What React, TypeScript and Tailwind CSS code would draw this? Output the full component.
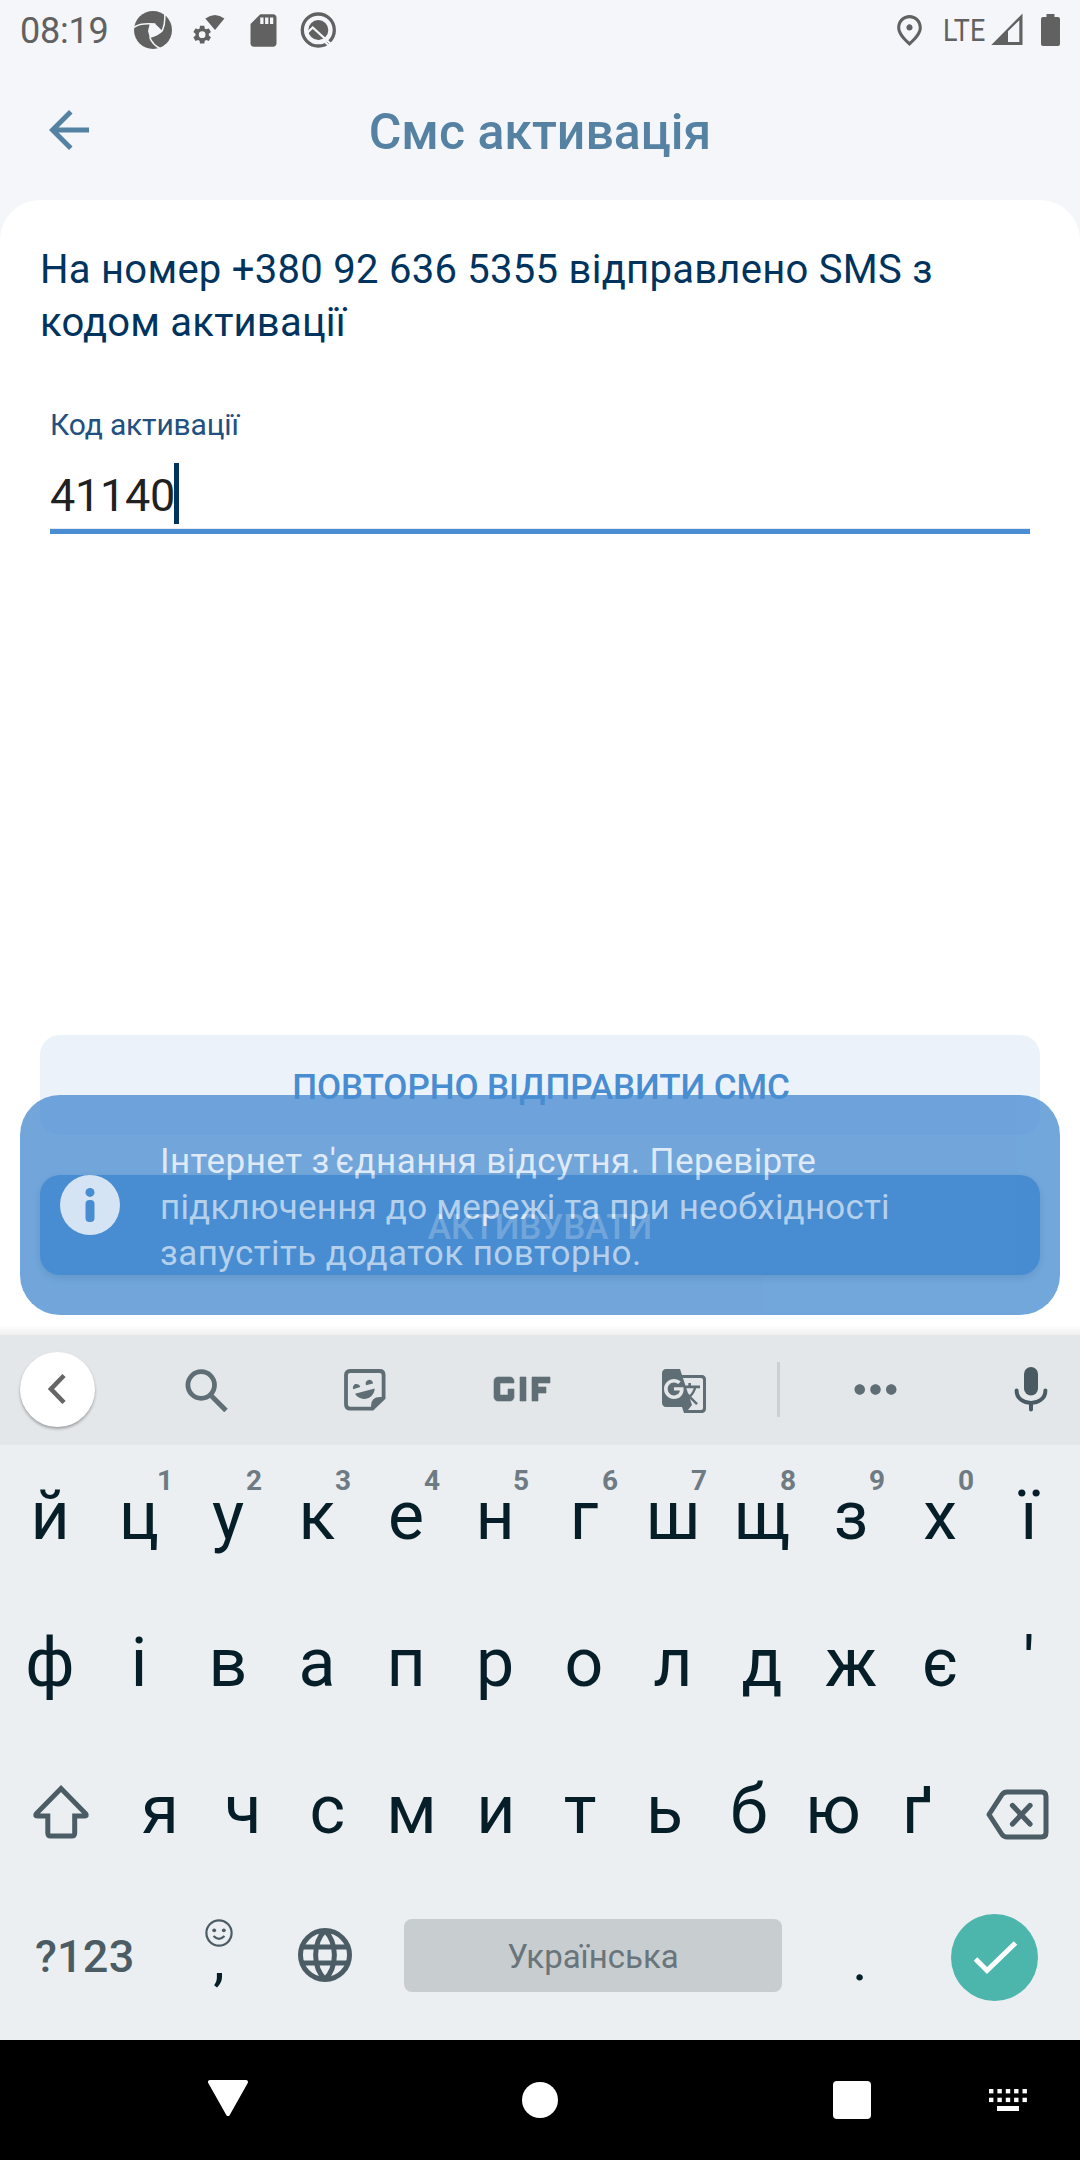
import React from "react";
import { MdGif, MdGTranslate, MdMoreHoriz, MdOutlinePlace, MdSdCard, MdArrowBack } from "react-icons/md";

const ROW_ONE: [string, string?][] = [
  ["й"], ["ц", "1"], ["у", "2"], ["к", "3"], ["е", "4"], ["н", "5"],
  ["г", "6"], ["ш", "7"], ["щ", "8"], ["з", "9"], ["х", "0"], ["ї"],
];
const ROW_TWO: [string, string?][] = [
  ["ф"], ["і"], ["в"], ["а"], ["п"], ["р"], ["о"], ["л"], ["д"], ["ж"], ["є"], ["'"],
];
const ROW_THREE = ["я", "ч", "с", "м", "и", "т", "ь", "б", "ю", "ґ"];

function StatusBar() {
  return (
    <div className="flex h-[60px] items-center text-[#616161]">
      <span className="ml-5 w-[89px] pt-[2px] text-[36px] leading-[42px] tracking-[-.2px] whitespace-nowrap">08:19</span>
      <svg className="ml-[25px]" width="39" height="38" viewBox="0 0 39 38">
        <circle cx="19" cy="19" r="19" fill="currentColor" />
        <path d="M15.7 12.7 21.3 13 28.3 19.7 22.7 24 15.7 26.3 14 20Z" fill="#f4f6fa" />
        <path d="M0 16.3Q6 11.5 21.3 13M30.6 1.5Q31.7 12 28.3 19.7M28.3 19.7Q24 24 15.7 26.3M15.7 26.3Q18.5 34 27 38M38.5 30 30 35.5" fill="none" stroke="#f4f6fa" strokeWidth="1.5" />
      </svg>
      <svg className="ml-[19px]" width="34" height="38" viewBox="0 0 34 38">
        <path d="M13.3 7.6Q23 .6 32.4 7.6L23 19Z" fill="currentColor" />
        <g transform="translate(-1 12.5) scale(.93)">
          <path fill="currentColor" d="M19.14 12.94c.04-.3.06-.61.06-.94 0-.32-.02-.64-.07-.94l2.03-1.58a.49.49 0 0 0 .12-.61l-1.92-3.32a.488.488 0 0 0-.59-.22l-2.39.96c-.5-.38-1.03-.7-1.62-.94l-.36-2.54a.484.484 0 0 0-.48-.41h-3.84c-.24 0-.43.17-.47.41l-.36 2.54c-.59.24-1.13.57-1.62.94l-2.39-.96c-.22-.08-.47 0-.59.22L2.74 8.87c-.12.21-.08.47.12.61l2.03 1.58c-.05.3-.09.63-.09.94s.02.64.07.94l-2.03 1.58a.49.49 0 0 0-.12.61l1.92 3.32c.12.22.37.29.59.22l2.39-.96c.5.38 1.03.7 1.62.94l.36 2.54c.05.24.24.41.48.41h3.84c.24 0 .44-.17.47-.41l.36-2.54c.59-.24 1.13-.56 1.62-.94l2.39.96c.22.08.47 0 .59-.22l1.92-3.32c.12-.22.07-.47-.12-.61l-2.01-1.58zM12 15.6A3.6 3.6 0 1 1 12 8.4a3.6 3.6 0 0 1 0 7.2z" />
        </g>
      </svg>
      <MdSdCard className="ml-[18px] size-[39px]" />
      <svg className="ml-[17px]" width="37" height="36" viewBox="0 0 37 36">
        <circle cx="18.300" cy="18" r="16" fill="none" stroke="currentColor" strokeWidth="3.300" />
        <circle cx="18.300" cy="18" r="10" fill="currentColor" />
        <path d="M6.500 21.500 12.700 15.500 33 34" fill="none" stroke="#f4f6fa" strokeWidth="2.300" />
        <path d="M11.500 19 20 27" fill="none" stroke="currentColor" strokeWidth="3" />
        <path d="M24.500 29.500 30 34.500" stroke="#f4f6fa" strokeWidth="2" />
      </svg>
      <MdOutlinePlace className="ml-auto size-[37px]" />
      <div className="ml-[15px] w-[43px]">
        <span className="block origin-left scale-x-[.84] text-[32px] leading-[38px]">LTE</span>
      </div>
      <svg className="-mt-[2px] ml-[5px]" width="32" height="32" viewBox="0 0 32 32">
        <path fill="currentColor" fillRule="evenodd" d="M.3 32 31.5.5V32ZM17 18.2V29H28.3V7.3Z" />
      </svg>
      <svg className="-mt-px mr-5 ml-[18px]" width="19" height="32" viewBox="0 0 19 32">
        <path fill="currentColor" d="M5.5 0h8v3H17a2 2 0 0 1 2 2v25a2 2 0 0 1-2 2H2a2 2 0 0 1-2-2V5a2 2 0 0 1 2-2h3.500Z" />
      </svg>
    </div>
  );
}

function Header() {
  return (
    <div className="flex h-[140px] items-center text-[#5581a3]">
      <MdArrowBack className="ml-[39px] size-[60px]" />
      <h1 className="mt-[3px] mr-[99px] flex-1 text-center text-[50px] leading-[60px] font-medium">Смс активація</h1>
    </div>
  );
}

function Snackbar() {
  return (
    <div className="absolute bottom-5 left-5 flex h-[220px] w-[1040px] items-center rounded-[40px] bg-[#488cd1] opacity-77">
      <svg className="ml-10" width="60" height="60" viewBox="0 0 60 60">
        <circle cx="30" cy="30" r="30" fill="#fff" />
        <circle cx="30" cy="17.400" r="4.500" fill="#488cd1" />
        <rect x="25.500" y="25" width="9" height="22" rx="4" fill="#488cd1" />
      </svg>
      <p className="mt-[6px] ml-10 text-[35px] leading-[46px] whitespace-nowrap text-white/78">
        <span className="block tracking-[.46px]">Інтернет з'єднання відсутня. Перевірте</span>
        <span className="block tracking-[.2px]">підключення до мережі та при необхідності</span>
        <span className="block tracking-[.43px]">запустіть додаток повторно.</span>
      </p>
    </div>
  );
}

function Card() {
  return (
    <div className="relative flex h-[1135px] flex-col overflow-hidden rounded-t-[40px] bg-white px-10 pt-[43px]">
      <p className="text-[40px] leading-[53px] whitespace-nowrap text-[#00345f]">
        <span className="block tracking-[.27px]">На номер +380 92 636 5355 відправлено SMS з</span>
        <span className="block tracking-[.2px]">кодом активації</span>
      </p>
      <div className="mx-[10px] mt-[58px] flex flex-col">
        <label className="text-[30px] leading-[36px] tracking-[-.15px] text-[#215081]">Код активації</label>
        <div className="mt-[20px] flex h-[61px] items-start">
          <span className="pt-[2px] text-[45px] leading-[61px] tracking-[-.3px] text-[#212121]">41140</span>
          <span className="-ml-px h-[61px] w-[5px] bg-[#00345f]" />
        </div>
        <div className="mt-[4px] h-[6px] border-t border-[#e6e9ef] bg-[#4b8dd3]" />
      </div>
      <div className="mt-auto mb-[60px] flex flex-col gap-10 text-[35px] font-medium">
        <button className="h-[100px] rounded-[20px] bg-[#ebf2fa] pt-[6px] pl-[2px] tracking-[-.07px] text-[#488cd1]">
          ПОВТОРНО ВІДПРАВИТИ СМС
        </button>
        <button className="h-[100px] rounded-[20px] bg-[#488cd1] pt-[6px] tracking-[-.05px] text-white shadow-[0_3px_8px_rgba(0,0,0,.28)]">
          АКТИВУВАТИ
        </button>
      </div>
      <Snackbar />
      <div className="absolute inset-x-0 bottom-0 h-[10px] bg-linear-to-b from-black/0 to-black/6" />
    </div>
  );
}

function Toolbar() {
  return (
    <div className="flex h-[110px] items-center bg-[#e3e7ea] pb-[2px] text-[#5f6e75]">
      <div className="ml-5 flex size-[75px] items-center justify-center rounded-full bg-white shadow-[0_2px_3px_rgba(0,0,0,.3)]">
        <svg width="20" height="32" viewBox="0 0 20 32" className="mr-px">
          <path d="M17 2.500 4 16 17 29.500" fill="none" stroke="#656565" strokeWidth="4.600" />
        </svg>
      </div>
      <svg className="mt-[2px] ml-[90px]" width="44" height="43" viewBox="0 0 44 43">
        <circle cx="16.200" cy="16" r="13.300" fill="none" stroke="currentColor" strokeWidth="4.800" />
        <path d="M26.500 27 41 41.500" stroke="currentColor" strokeWidth="5" />
      </svg>
      <svg className="mt-px ml-[115px]" width="42" height="42" viewBox="0 0 42 42">
        <path d="M6 2H35.600Q39.600 2 39.600 6V29L28.500 39.600H6Q2 39.600 2 35.600V6Q2 2 6 2Z" fill="none" stroke="currentColor" strokeWidth="3.800" />
        <path d="M41 28H36Q27 28 27 37V41.400Z" fill="currentColor" />
        <path d="M9.200 20.200A3.700 3.700 0 1 1 16.200 18Z" fill="currentColor" />
        <path d="M22 16.200A3.700 3.700 0 1 1 29 14.400Z" fill="currentColor" />
        <path d="M11 24.800 30.700 19.600C30 31.500 15.500 33 11 24.800Z" fill="currentColor" />
      </svg>
      <MdGif className="ml-[88px] size-[96px] stroke-current stroke-[.15] [&_path[fill=none]]:stroke-none" />
      <MdGTranslate className="mt-[3px] ml-[90px] size-[48px]" />
      <div className="ml-[69px] h-[55px] w-[3px] bg-[#cbd0d3]" />
      <MdMoreHoriz className="mt-px ml-[64px] size-[63px]" />
      <svg className="ml-[106px] text-[#4a5a62]" width="36" height="45" viewBox="0 0 36 45">
        <rect x="11" y="0" width="14" height="28.500" rx="7" fill="currentColor" />
        <path d="M3.600 23.500C3.600 40 32.400 40 32.400 23.500M18 36V42.500" fill="none" stroke="currentColor" strokeWidth="4" strokeLinecap="round" />
      </svg>
    </div>
  );
}

function KeyRow({ keys }: { keys: [string, string?][] }) {
  return (
    <div className="grid h-[147px] grid-cols-12 pr-[6.500px] pl-[5.500px]">
      {keys.map(([key, hint]) => (
        <div key={key} className="relative flex items-center justify-center">
          <span>{key}</span>
          {hint && (
            <span className="absolute top-[22px] left-[62.500px] text-[28px] leading-[34px] font-bold text-[#6f7b82]">{hint}</span>
          )}
        </div>
      ))}
    </div>
  );
}

function Keyboard() {
  return (
    <div className="h-[705px] bg-[#ebeff2] text-[#061e28]">
      <Toolbar />
      <div className="-mt-[3px] text-[68px] leading-[80px]">
        <KeyRow keys={ROW_ONE} />
        <KeyRow keys={ROW_TWO} />
        <div className="flex h-[147px] items-center">
          <div className="w-[116.500px] pl-[31px]">
            <svg className="mt-[4px]" width="60" height="58" viewBox="0 0 60 58">
              <path d="M30 5.500 54.600 30.600Q56.500 33 53.500 33H43.700V50Q43.700 53 40.700 53H19.800Q16.800 53 16.800 50V33H6.500Q3.500 33 5.400 30.600Z" fill="none" stroke="#4b5c64" strokeWidth="5" />
            </svg>
          </div>
          {ROW_THREE.map((key) => (
            <span key={key} className="w-[84.300px] text-center first-of-type:pl-[3px]">{key}</span>
          ))}
          <svg className="mt-[8px] ml-[24.500px]" width="66" height="54" viewBox="0 0 66 54">
            <path d="M5 27.500 18 7.500Q20 5 23 5H57.500Q62 5 62 9.500V45.500Q62 50 57.500 50H23Q20 50 18 47.500Z" fill="none" stroke="#4b5c64" strokeWidth="5" strokeLinejoin="round" />
            <path d="M28.500 18.500 46 37M46 18.500 28.500 37" stroke="#4b5c64" strokeWidth="5.200" strokeLinecap="round" />
          </svg>
        </div>
        <div className="flex h-[147px] items-center">
          <span className="ml-[35px] w-[99px] text-[45px] leading-[54px] font-medium tracking-[.2px] whitespace-nowrap text-[#4b5c64]">?123</span>
          <div className="ml-[57px] flex w-[56px] flex-col items-center self-start pt-[36px]">
            <svg width="28" height="28" viewBox="0 0 28 28" fill="none" stroke="#4b5c64" strokeWidth="2.200">
              <circle cx="14" cy="14" r="12.600" />
              <circle cx="9.200" cy="11.300" r="1.900" fill="#4b5c64" stroke="none" />
              <circle cx="18.800" cy="11.300" r="1.900" fill="#4b5c64" stroke="none" />
              <path d="M8.500 17Q14 22.500 19.500 17" />
            </svg>
            <span className="-mt-[8px] text-[58px] leading-[40px]">,</span>
          </div>
          <svg className="-mt-[3px] ml-[51px]" width="54" height="54" viewBox="0 0 54 54" fill="none" stroke="#4b5c64" strokeWidth="5">
            <circle cx="27" cy="27" r="24.500" />
            <path d="M4.500 19H49.500M4.500 35H49.500M27 2.500C14.500 15 14.500 39 27 51.500M27 2.500C39.500 15 39.500 39 27 51.500" />
          </svg>
          <div className="-mt-[2px] ml-[52px] flex h-[73px] w-[378px] items-center justify-center rounded-[8px] bg-[#c8cdd0] pt-[2px] text-[33px] leading-[40px] text-[#69757b]">
            Українська
          </div>
          <span className="mt-[7px] ml-[58px] w-[40px] text-center text-[58px] leading-[60px]">.</span>
          <div className="mt-[2px] ml-[71px] flex size-[87px] items-center justify-center rounded-full bg-[#4db6ac]">
            <svg width="46" height="36" viewBox="0 0 46 36">
              <path d="M3.500 19 15 30.500 43.500 3" fill="none" stroke="#fff" strokeWidth="5" />
            </svg>
          </div>
        </div>
      </div>
    </div>
  );
}

function NavBar() {
  const dots = [0, 8.4, 16.8, 25.1, 33.5];
  return (
    <div className="flex h-[120px] items-center bg-black">
      <svg className="-mt-[5px] ml-[208px]" width="40" height="36" viewBox="0 0 40 36">
        <path d="M2 2H38L20 34Z" fill="#fff" stroke="#fff" strokeWidth="4" strokeLinejoin="round" />
      </svg>
      <div className="ml-[274px] size-[36px] rounded-full bg-white" />
      <div className="ml-[275px] size-[38px] rounded-[4px] bg-white" />
      <svg className="ml-[118px]" width="38" height="22" viewBox="0 0 38 22" fill="#fff">
        {dots.map((x) => (
          <g key={x}>
            <rect x={x} y="0" width="4.400" height="4.400" />
            <rect x={x} y="8.700" width="4.400" height="4.400" />
          </g>
        ))}
        <rect x="8" y="17" width="22" height="5" />
      </svg>
    </div>
  );
}

export default function App() {
  return (
    <div className="h-[2160px] w-[1080px] overflow-hidden bg-[#f4f6fa] font-[Roboto,sans-serif]">
      <StatusBar />
      <Header />
      <Card />
      <Keyboard />
      <NavBar />
    </div>
  );
}
